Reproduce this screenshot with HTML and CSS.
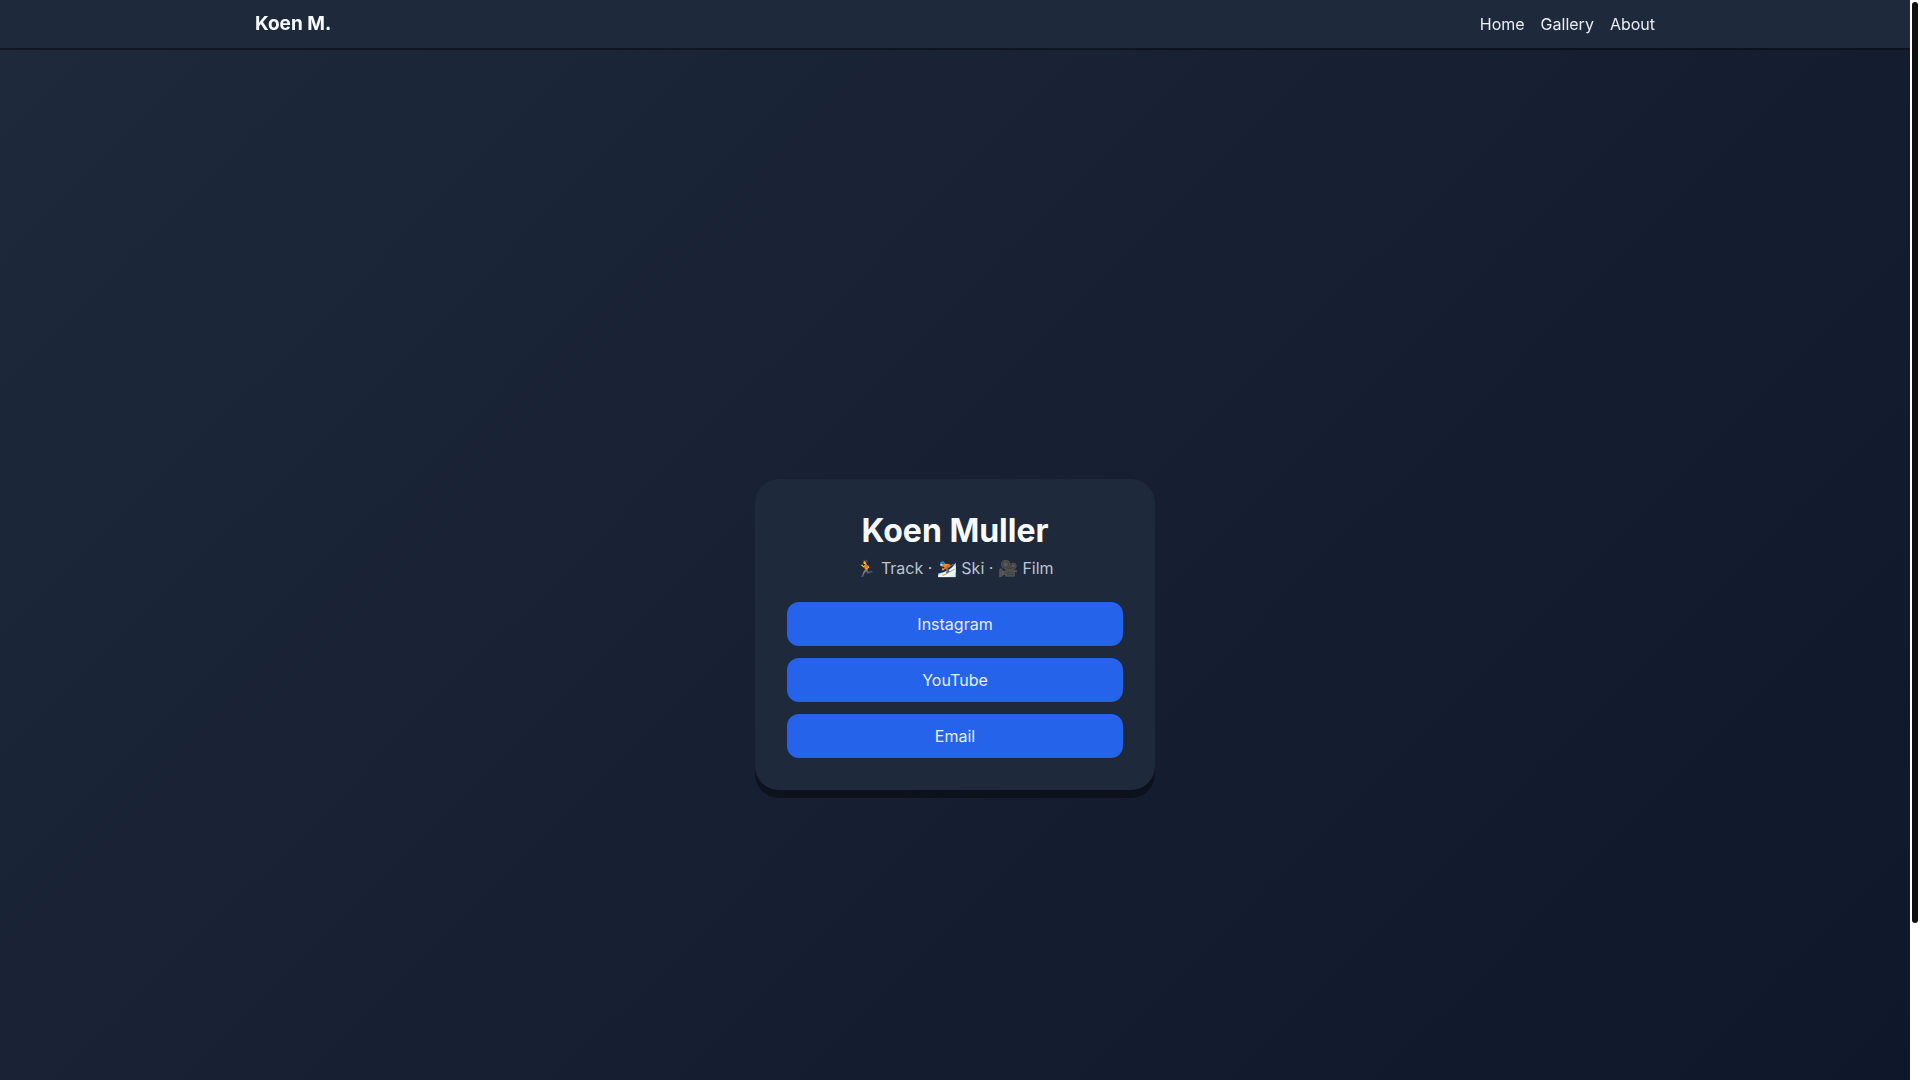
FILE: index.html
```html
<!DOCTYPE html>
<html lang="en">
<head>
    <meta charset="UTF-8">
    <meta name="viewport" content="width=device-width, initial-scale=1.0">
    <title>Koen Muller</title>
    <link rel="stylesheet" href="styles.css">
</head>
<body>

    <div class="page">
        <header class="navbar">
            <nav class="nav-inner">
                <a class="brand" href="#">Koen M.</a>
                <div class="nav-links">
                    <a href="#">Home</a>
                    <a href="#gallery">Gallery</a>
                    <a href="#about">About</a>
                </div>
            </nav>
        </header>

        <main class="hero">
            <section class="card">
                <h1>Koen Muller</h1>
                <p class="tagline">🏃 Track · ⛷️ Ski · 🎥 Film</p>
                <div class="links">
                    <a class="btn" href="#instagram">Instagram</a>
                    <a class="btn" href="#youtube">YouTube</a>
                    <a class="btn" href="#email">Email</a>
                </div>
            </section>
        </main>
    </div>

    <!-- Scroll rail -->
    <div class="rail">
        <div class="rail-thumb"></div>
    </div>

</body>
</html>
```
FILE: styles.css
```css
* {
    box-sizing: border-box;
    margin: 0;
    padding: 0;
}

body {
    display: flex;
    height: 100vh;
    overflow: hidden;
    font-family: Inter, sans-serif;
    font-size: 16px;
    line-height: 20px;
    color: #f8fafc;
}

a {
    color: inherit;
    text-decoration: none;
}

.page {
    flex: 1;
    overflow-y: auto;
    scrollbar-width: none;
    background: linear-gradient(135deg, #1e293b, #0f172a);
}

/* Scroll rail */
.rail {
    width: 10px;
    padding: 2px;
    background: white;
}

.rail-thumb {
    height: 85.6%;
    background: #0f0f0f;
    border-radius: 3px;
}

/* Navigation */
.navbar {
    position: sticky;
    top: 0;
    background: #1e293b;
    box-shadow: 0 2px 0 rgba(0, 0, 0, 0.4);
}

.nav-inner {
    display: flex;
    justify-content: space-between;
    align-items: center;
    max-width: 1400px;
    margin: 0 auto;
    padding: 12px 0;
}

.brand {
    font-size: 19px;
    font-weight: 700;
    line-height: 24px;
}

.nav-links {
    display: flex;
    gap: 16px;
    color: #e8edf3;
}

/* Profile card */
.hero {
    display: flex;
    justify-content: center;
    align-items: center;
    min-height: calc(100vh + 93px);
}

.card {
    width: 400px;
    max-width: 100%;
    padding: 32px;
    text-align: center;
    background: #1e293b;
    border-radius: 24px;
    box-shadow: 0 8px 0 rgba(0, 0, 0, 0.4);
}

.card h1 {
    margin-bottom: 8px;
    font-size: 32px;
    line-height: 39px;
}

.tagline {
    margin-bottom: 24px;
    color: #b9c4d2;
}

.links {
    display: flex;
    flex-direction: column;
    gap: 12px;
}

.btn {
    padding: 12px;
    color: #e8edf3;
    background: #2563eb;
    border-radius: 12px;
}

.btn:hover {
    background: #1d4ed8;
}
```
